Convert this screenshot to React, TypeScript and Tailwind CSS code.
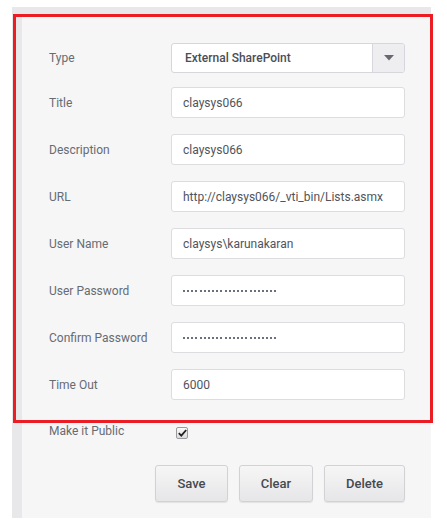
import React from "react";

// Connection settings form (External SharePoint) with highlight box overlay

const fields: { label: string; value: string; password?: boolean }[] = [
  { label: "Title", value: "claysys066" },
  { label: "Description", value: "claysys066" },
  { label: "URL", value: "http://claysys066/_vti_bin/Lists.asmx" },
  { label: "User Name", value: "claysys\\karunakaran" },
  { label: "User Password", value: "", password: true },
  { label: "Confirm Password", value: "", password: true },
  { label: "Time Out", value: "6000" },
];

function Row({ label, children, className = "" }: { label: string; children: React.ReactNode; className?: string }) {
  return (
    <div className={`flex items-center ${className}`}>
      <div className="w-[122px] shrink-0 text-[12px] text-[#676b72]">{label}</div>
      {children}
    </div>
  );
}

function Dots() {
  return (
    <div className="flex items-center">
      {Array.from({ length: 23 }).map((_, i) => (
        <span key={i} className="w-[4.17px] flex">
          <span className="w-[2px] h-[2px] bg-[#6b7080]" />
        </span>
      ))}
    </div>
  );
}

export default function App() {
  return (
    <div className="relative w-[447px] h-[531px] bg-white font-['Roboto',sans-serif]">
      <div className="ml-[12px] mt-[7px] w-[419px] h-[511px] bg-[#e8e8eb] pl-[10px] pt-[9px]">
        <div className="h-[502px] bg-[#f6f6f7] pl-[27px] pr-[26px] pt-[27px]">
          <Row label="Type">
            <div className="flex-1 h-[30px] flex bg-white border border-[#d6d6dc] rounded-[3px] overflow-hidden">
              <div className="flex-1 flex items-center pl-[13px] text-[12px] font-medium text-[#4a4e55]">
                External SharePoint
              </div>
              <div className="w-[32px] flex items-center justify-center bg-[#eeeef0] border-l border-[#d6d6dc]">
                <svg width="10" height="6" viewBox="0 0 10 6">
                  <path d="M0 0 L10 0 L5 5.5 Z" fill="#666a70" />
                </svg>
              </div>
            </div>
          </Row>

          {fields.map((f, i) => (
            <Row key={f.label} label={f.label} className={i === 0 ? "mt-[14px]" : "mt-[16px]"}>
              <div className="flex-1 h-[31px] flex items-center bg-white border border-[#dcdce1] rounded-[3px] pl-[11px] text-[12px] text-[#50545b]">
                {f.password ? <Dots /> : f.value}
              </div>
            </Row>
          ))}

          <Row label="Make it Public" className="mt-[22px] items-start">
            <div className="ml-[5px] mt-[5px] w-[12px] h-[12px] rounded-[2px] border border-[#9a9a9e] bg-gradient-to-b from-[#fafafa] to-[#dcdcde] flex items-center justify-center">
              <svg width="9" height="8" viewBox="0 0 9 8">
                <path d="M0.8 4.2 L3.3 6.6 L8.2 1" stroke="#222" strokeWidth="1.8" fill="none" />
              </svg>
            </div>
          </Row>

          <div className="flex justify-end gap-[11px] mt-[25px]">
            {[
              ["Save", "w-[73px]"],
              ["Clear", "w-[74px]"],
              ["Delete", "w-[81px]"],
            ].map(([t, w]) => (
              <button
                key={t}
                className={`${w} h-[37px] rounded-[3px] border border-[#d2d2d6] bg-gradient-to-b from-[#f6f6f6] to-[#e6e6e8] text-[13px] font-medium text-[#45494f] shadow-[0_1px_1px_rgba(0,0,0,0.08)]`}
              >
                {t}
              </button>
            ))}
          </div>
        </div>
      </div>

      {/* red highlight box */}
      <div className="absolute left-[13px] top-[7px] w-[420px] h-[409px] border-[3px] border-[#ec1c24] pointer-events-none" />
    </div>
  );
}
